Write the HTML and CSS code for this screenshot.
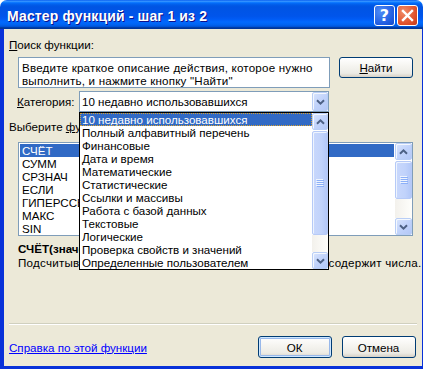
FILE: index.html
```html
<!DOCTYPE html>
<html lang="ru">
<head>
  <meta charset="UTF-8" />
  <title>Мастер функций - шаг 1 из 2</title>
  <link rel="stylesheet" href="styles.css">
</head>
<body>
  <div class="window">
    <div class="titlebar">
      <span class="title">Мастер функций - шаг 1 из 2</span>
      <div class="caption-buttons">
        <span class="cap-btn help">?</span>
        <span class="cap-btn close">
          <svg width="13" height="13" viewBox="0 0 13 13"><path d="M2 2 L11 11 M11 2 L2 11" stroke="#fff" stroke-width="2.4" stroke-linecap="square"/></svg>
        </span>
      </div>
    </div>
    <div class="frame">
      <div class="client">
        <div class="search-label"><u>П</u>оиск функции:</div>
        <div class="search-row">
          <div class="search-box">Введите краткое описание действия, которое нужно<br>выполнить, и нажмите кнопку "Найти"</div>
          <button class="btn find"><u>Н</u>айти</button>
        </div>
        <div class="cat-row">
          <span class="cat-label"><u>К</u>атегория:</span>
          <div class="combo">
            <span class="combo-text">10 недавно использовавшихся</span>
            <span class="sb-btn combo-btn">
              <svg width="9" height="6" viewBox="0 0 9 6"><path d="M1 1.2 L4.5 4.6 L8 1.2" stroke="#4D6185" stroke-width="2" fill="none"/></svg>
            </span>
            <div class="dropdown">
              <div class="dd-items">
                <div class="dd-item selected">10 недавно использовавшихся</div>
                <div class="dd-item">Полный алфавитный перечень</div>
                <div class="dd-item">Финансовые</div>
                <div class="dd-item">Дата и время</div>
                <div class="dd-item">Математические</div>
                <div class="dd-item">Статистические</div>
                <div class="dd-item">Ссылки и массивы</div>
                <div class="dd-item">Работа с базой данных</div>
                <div class="dd-item">Текстовые</div>
                <div class="dd-item">Логические</div>
                <div class="dd-item">Проверка свойств и значений</div>
                <div class="dd-item">Определенные пользователем</div>
              </div>
              <div class="scrollbar">
                <span class="sb-btn">
                  <svg width="9" height="6" viewBox="0 0 9 6"><path d="M1 4.8 L4.5 1.4 L8 4.8" stroke="#4D6185" stroke-width="2" fill="none"/></svg>
                </span>
                <span class="sb-thumb dd-thumb">
                  <svg width="8" height="8" viewBox="0 0 8 8"><path d="M0 0.5h7M0 2.5h7M0 4.5h7M0 6.5h7" stroke="#EEF4FE"/><path d="M1 1.5h7M1 3.5h7M1 5.5h7M1 7.5h7" stroke="#8CB0F8"/></svg>
                </span>
                <span class="sb-track"></span>
                <span class="sb-btn">
                  <svg width="9" height="6" viewBox="0 0 9 6"><path d="M1 1.2 L4.5 4.6 L8 1.2" stroke="#4D6185" stroke-width="2" fill="none"/></svg>
                </span>
              </div>
            </div>
          </div>
        </div>
        <div class="pick-label">Выберите <u>ф</u>ункцию:</div>
        <div class="func-list">
          <div class="fl-items">
            <div class="fl-item selected">СЧЁТ</div>
            <div class="fl-item">СУММ</div>
            <div class="fl-item">СРЗНАЧ</div>
            <div class="fl-item">ЕСЛИ</div>
            <div class="fl-item">ГИПЕРССЫЛКА</div>
            <div class="fl-item">МАКС</div>
            <div class="fl-item">SIN</div>
          </div>
          <div class="scrollbar">
            <span class="sb-btn">
              <svg width="9" height="6" viewBox="0 0 9 6"><path d="M1 4.8 L4.5 1.4 L8 4.8" stroke="#4D6185" stroke-width="2" fill="none"/></svg>
            </span>
            <span class="sb-thumb fl-thumb">
              <svg width="8" height="8" viewBox="0 0 8 8"><path d="M0 0.5h7M0 2.5h7M0 4.5h7M0 6.5h7" stroke="#EEF4FE"/><path d="M1 1.5h7M1 3.5h7M1 5.5h7M1 7.5h7" stroke="#8CB0F8"/></svg>
            </span>
            <span class="sb-track"></span>
            <span class="sb-btn">
              <svg width="9" height="6" viewBox="0 0 9 6"><path d="M1 1.2 L4.5 4.6 L8 1.2" stroke="#4D6185" stroke-width="2" fill="none"/></svg>
            </span>
          </div>
        </div>
        <div class="signature">СЧЁТ(значение1;значение2;...)</div>
        <div class="desc">Подсчитывает количество ячеек в диапазоне, который содержит числа.</div>
        <div class="sep"></div>
        <div class="footer">
          <a class="help-link" href="#">Справка по этой функции</a>
          <button class="btn default">ОК</button>
          <button class="btn">Отмена</button>
        </div>
      </div>
    </div>
  </div>
</body>
</html>
```

FILE: styles.css
```css
* {
  box-sizing: border-box;
}
html, body {
  margin: 0;
  padding: 0;
  background: #fff;
}
body {
  width: 423px;
  height: 369px;
  font-family: "Liberation Sans", Arial, sans-serif;
  font-size: 11.6px;
  color: #000;
}
.window {
  width: 423px;
  height: 369px;
  display: flex;
  flex-direction: column;
  border-radius: 7px 7px 0 0;
  overflow: hidden;
}
.titlebar {
  height: 29px;
  flex: none;
  display: flex;
  align-items: center;
  padding-left: 7px;
  background: linear-gradient(to bottom, #0058EE 0%, #3A93FF 4%, #288EFF 6%, #127DFF 8%, #036FFC 10%, #0262EE 14%, #0057E5 20%, #0054E3 24%, #0055EB 56%, #005BF5 66%, #026AFE 76%, #0062EF 86%, #0052D6 92%, #0040AB 94%, #003092 100%);
}
.title {
  color: #fff;
  font-weight: bold;
  font-size: 14px;
  letter-spacing: 0.15px;
  text-shadow: 1px 1px #0F1089;
  margin-top: 2px;
}
.caption-buttons {
  margin-left: auto;
  margin-right: 5px;
  display: flex;
  gap: 2px;
  align-self: flex-start;
  margin-top: 5px;
}
.cap-btn {
  width: 21px;
  height: 21px;
  border: 1px solid #fff;
  border-radius: 3px;
  display: flex;
  align-items: center;
  justify-content: center;
  color: #fff;
}
.cap-btn.help {
  background: radial-gradient(circle at 30% 30%, #4F8CF6, #1F5BE0 70%, #1548C4);
  font-weight: bold;
  font-size: 16px;
  font-family: "DejaVu Sans", sans-serif;
}
.cap-btn.close {
  background: radial-gradient(circle at 30% 30%, #F08C68, #E0502A 65%, #C1391A);
}
.frame {
  flex: 1;
  display: flex;
  border-left: 4px solid #0831D9;
  border-right: 4px solid #0831D9;
  border-bottom: 3px solid #0831D9;
}
.client {
  flex: 1;
  background: #ECE9D8;
  display: flex;
  flex-direction: column;
  line-height: 13px;
}
.search-label {
  margin: 9px 0 0 5px;
}
.search-row {
  display: flex;
  align-items: flex-start;
  margin-top: 6px;
}
.search-box {
  margin-left: 14px;
  width: 312px;
  height: 31px;
  border: 1px solid #7F9DB9;
  background: #fff;
  padding: 3px 3px;
  white-space: nowrap;
  letter-spacing: 0.2px;
}
.btn {
  width: 74px;
  height: 22px;
  border: 1px solid #003C74;
  border-radius: 3px;
  background: linear-gradient(to bottom, #FFFFFF 0%, #F6F5F1 40%, #ECEBE5 80%, #D6D0C5 100%);
  font-family: "Liberation Sans", Arial, sans-serif;
  font-size: 11.6px;
  color: #000;
  padding: 0;
}
.btn.find {
  margin-left: 9px;
  height: 21px;
}
.btn.default {
  box-shadow: inset 0 0 0 1px #CEE7FF, inset 0 0 0 2px #98B8EA;
}
.cat-row {
  display: flex;
  align-items: center;
  margin-top: 3px;
}
.cat-label {
  margin-left: 13px;
  width: 62px;
}
.combo {
  position: relative;
  width: 250px;
  height: 21px;
  border: 1px solid #7F9DB9;
  background: #fff;
  display: flex;
  align-items: center;
  padding-left: 2px;
}
.combo-text {
  flex: 1;
}
.sb-btn {
  width: 16px;
  height: 17px;
  flex: none;
  border: 1px solid #B9CEF6;
  border-radius: 2px;
  background: linear-gradient(135deg, #D9E5FD 0%, #C1D3FB 50%, #B4C8F6 100%);
  box-shadow: inset 1px 1px #F4F8FE;
  display: flex;
  align-items: center;
  justify-content: center;
}
.combo-btn {
  height: 19px;
}
.dropdown {
  position: absolute;
  left: -1px;
  top: 20px;
  width: 250px;
  height: 158px;
  border: 1px solid #000;
  background: #fff;
  display: flex;
  z-index: 2;
}
.dd-items {
  flex: 1;
  overflow: hidden;
}
.dd-item {
  height: 13px;
  padding-left: 2px;
  white-space: nowrap;
}
.dd-item.selected {
  background: #316AC5;
  color: #fff;
  outline: 1px dotted #D9A12E;
  outline-offset: -1px;
}
.scrollbar {
  width: 16px;
  flex: none;
  display: flex;
  flex-direction: column;
}
.sb-thumb {
  border: 1px solid #B6CAF7;
  border-radius: 2px;
  background: linear-gradient(to right, #C9D8FC 0%, #C1D3FB 60%, #B3C8F8 100%);
  box-shadow: inset 1px 1px #EEF4FE;
  display: flex;
  align-items: center;
  justify-content: center;
  margin-top: 1px;
}
.dd-thumb {
  height: 104px;
}
.fl-thumb {
  height: 38px;
}
.sb-track {
  flex: 1;
  background: linear-gradient(to right, #F3F1EC, #FEFEFB);
}
.pick-label {
  margin: 8px 0 0 5px;
}
.func-list {
  margin: 9px 0 0 14px;
  width: 395px;
  height: 94px;
  border: 1px solid #7F9DB9;
  background: #fff;
  display: flex;
}
.fl-items {
  flex: 1;
  padding: 1px;
}
.fl-item {
  height: 13px;
  padding-left: 2px;
}
.fl-item.selected {
  background: #316AC5;
  color: #fff;
}
.func-list .scrollbar {
  width: 17px;
}
.func-list .sb-btn {
  width: 17px;
}
.signature {
  margin: 6px 0 0 14px;
  font-weight: bold;
}
.desc {
  margin: 1px 0 0 14px;
  white-space: nowrap;
  letter-spacing: 0.25px;
}
.sep {
  margin: auto 5px 0 5px;
  height: 2px;
  border-top: 1px solid #D0D0BF;
  border-bottom: 1px solid #fff;
}
.footer {
  display: flex;
  align-items: center;
  margin-top: 11px;
  padding: 0 6px 8px 5px;
}
.help-link {
  color: #0000FF;
  text-decoration: underline;
  margin-right: auto;
}
.footer .btn + .btn {
  margin-left: 10px;
}
```
